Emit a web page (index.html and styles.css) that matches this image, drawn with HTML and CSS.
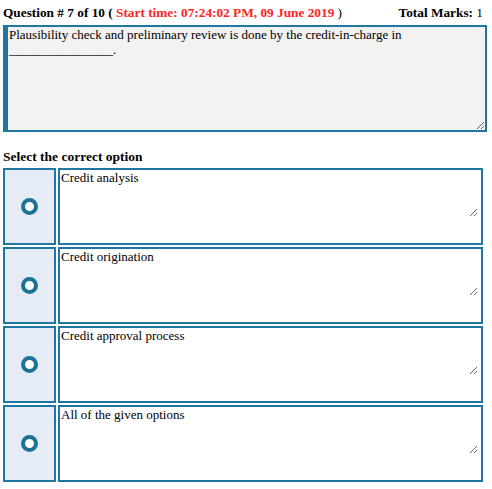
FILE: index.html
```html
<!doctype html>
<html>
    <head>
        <meta charset="utf-8">
        <meta name="viewport" content="width=device-width,initial-scale=1">
        <title>Quiz Question</title>
        <link rel="stylesheet" href="styles.css">
    </head>
    <body>
        <section class="quiz">
            <div class="quiz-header">
                <div class="quiz-title">
                    <b>Question # 7 of 10 (</b>
                    <b class="start-time">Start time: 07:24:02 PM, 09 June 2019</b>
                    )
                </div>
                <div class="quiz-marks"><b>Total Marks:</b> 1</div>
            </div>
            <textarea class="question" readonly>Plausibility check and preliminary review is done by the credit-in-charge in ________________.</textarea>
            <h4 class="options-title">Select the correct option</h4>
            <div class="options">
                <div class="option">
                    <div class="option-radio"><span class="radio"></span></div>
                    <div class="option-body">
                        <textarea class="option-text" readonly>Credit analysis</textarea>
                    </div>
                </div>
                <div class="option">
                    <div class="option-radio"><span class="radio"></span></div>
                    <div class="option-body">
                        <textarea class="option-text" readonly>Credit origination</textarea>
                    </div>
                </div>
                <div class="option">
                    <div class="option-radio"><span class="radio"></span></div>
                    <div class="option-body">
                        <textarea class="option-text" readonly>Credit approval process</textarea>
                    </div>
                </div>
                <div class="option">
                    <div class="option-radio"><span class="radio"></span></div>
                    <div class="option-body">
                        <textarea class="option-text" readonly>All of the given options</textarea>
                    </div>
                </div>
            </div>
        </section>
    </body>
</html>
```

FILE: styles.css
```css
body {
    margin: 0;
    background: #fff;
    color: #000;
    font-family: "Liberation Serif", "Times New Roman", serif;
}
.quiz {
    padding: 2px 3px;
}
.quiz-header {
    display: flex;
    justify-content: space-between;
    align-items: baseline;
    font-size: 13.3px;
    line-height: 20px;
    padding: 1px 6px 0 0;
}
.start-time {
    color: #ff2424;
}
.question {
    display: block;
    box-sizing: border-box;
    width: 484px;
    height: 107px;
    margin: 2px 0 0;
    padding: 0 1px;
    border: 2px solid #1f76a0;
    border-left-width: 5px;
    background: #f2f2f2;
    font-family: "Liberation Serif", "Times New Roman", serif;
    font-size: 13px;
    line-height: 15px;
    color: #000;
    outline: none;
}
.options-title {
    margin: 17px 0 3px;
    font-size: 13.5px;
    line-height: 16px;
}
.options {
    display: flex;
    flex-direction: column;
    gap: 2px;
}
.option {
    display: flex;
    gap: 2px;
    height: 77px;
}
.option-radio {
    box-sizing: border-box;
    width: 53px;
    border: 2px solid #1f76a0;
    background: #e5ecf6;
    display: flex;
    align-items: center;
    justify-content: center;
}
.radio {
    box-sizing: border-box;
    width: 17px;
    height: 17px;
    border: 4px solid #1d7297;
    border-radius: 50%;
    background: #fff;
}
.option-body {
    box-sizing: border-box;
    width: 425px;
    border: 2px solid #1f76a0;
    background: #fff;
}
.option-text {
    display: block;
    box-sizing: border-box;
    width: calc(100% - 3px);
    height: 47px;
    margin: 0;
    padding: 0 1px;
    border: 0;
    background: #fff;
    font-family: "Liberation Serif", "Times New Roman", serif;
    font-size: 13px;
    line-height: 15px;
    color: #000;
    outline: none;
}
```
